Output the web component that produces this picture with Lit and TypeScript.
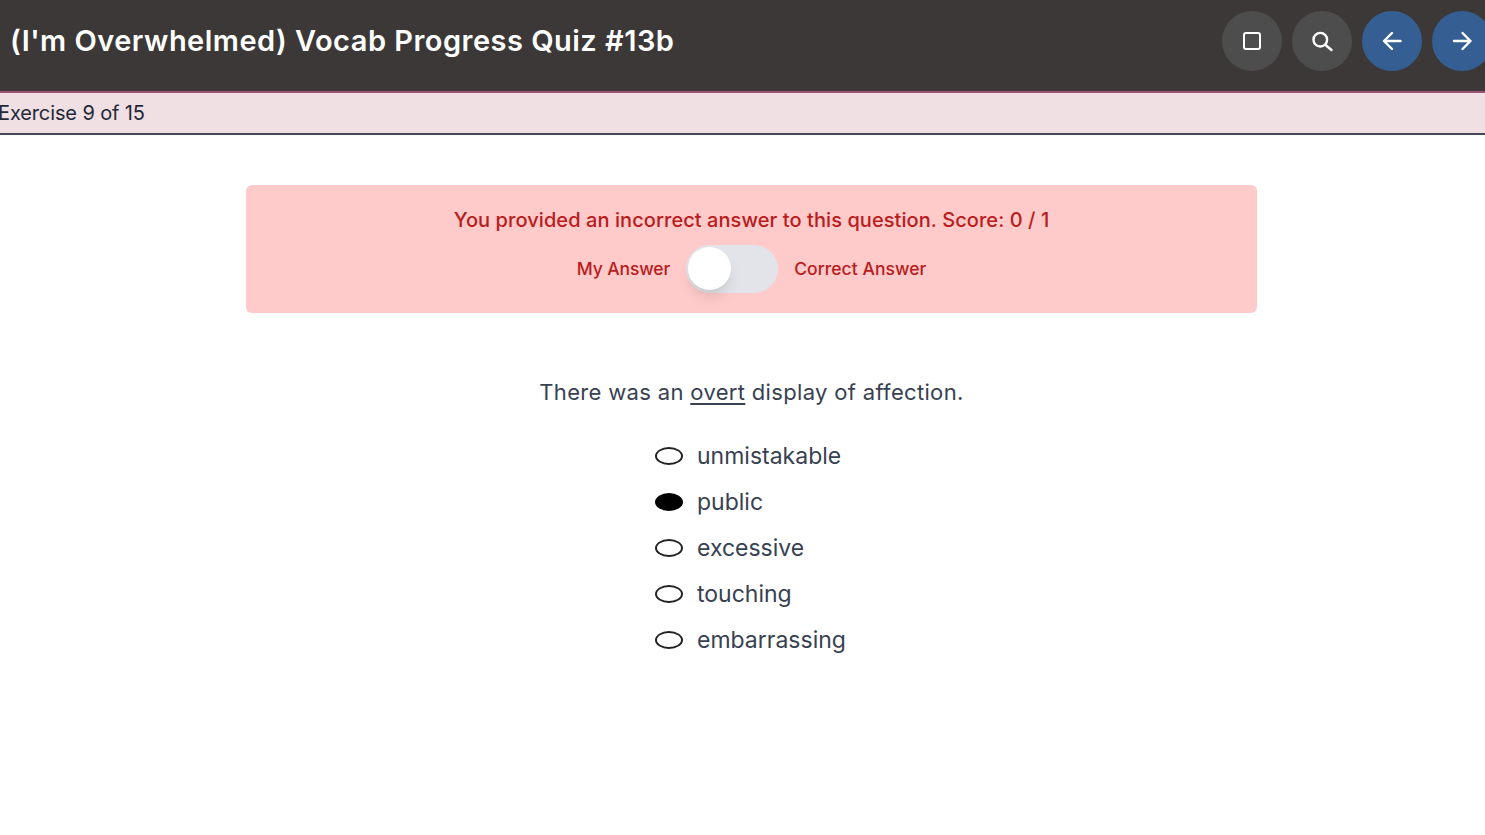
import { LitElement, html, css } from "lit";
import { customElement, state } from "lit/decorators.js";

@customElement("app-root")
export class AppRoot extends LitElement {
  static styles = css`
    :host {
      display: block;
      width: 1485px;
      height: 835px;
      overflow: hidden;
      background: #fff;
      font-family: "Inter", "Noto Sans", sans-serif;
      color: #374151;
    }

    .header {
      display: flex;
      align-items: flex-start;
      justify-content: space-between;
      width: 1492px;
      height: 91px;
      padding: 11px 0 0 10px;
      box-sizing: border-box;
      background: #3c3838;
    }

    h1 {
      margin: 0;
      font-size: 29px;
      line-height: 60px;
      font-weight: 600;
      color: #fff;
      letter-spacing: 0.48px;
    }

    .buttons {
      display: flex;
      gap: 10px;
    }

    .btn {
      width: 60px;
      height: 60px;
      border-radius: 50%;
      background: #4d4d4d;
      display: flex;
      align-items: center;
      justify-content: center;
    }

    .btn.nav {
      background: #355f92;
    }

    .btn svg {
      width: 24px;
      height: 24px;
      fill: none;
      stroke: #fff;
      stroke-width: 2.4;
      stroke-linecap: round;
      stroke-linejoin: round;
    }

    .btn .thin {
      stroke-width: 2;
    }

    .progress {
      height: 40px;
      display: flex;
      align-items: center;
      background: #f0dfe3;
      border-top: 2px solid #9b5378;
      border-bottom: 2px solid #45495a;
      font-size: 20px;
      letter-spacing: -0.12px;
      color: #1f2937;
      margin-left: -2px;
    }

    .main {
      width: 1011px;
      margin: 50px 0 0 246px;
    }

    .alert {
      height: 128px;
      box-sizing: border-box;
      padding-top: 22px;
      background: #fecaca;
      border-radius: 6px;
      color: #b91c1c;
      text-align: center;
      font-size: 20px;
      line-height: 26px;
      letter-spacing: 0.07px;
      font-weight: 500;
    }

    .switch-row {
      display: flex;
      align-items: center;
      justify-content: center;
      gap: 16px;
      margin-top: 12px;
      font-size: 17.5px;
      line-height: 24px;
      letter-spacing: 0.05px;
      font-weight: 500;
    }

    .mine {
      letter-spacing: -0.1px;
    }

    .track {
      width: 92px;
      height: 48px;
      border-radius: 24px;
      background: #e2e4e9;
      position: relative;
    }

    .knob {
      position: absolute;
      left: 2px;
      top: 2px;
      width: 43px;
      height: 43px;
      border-radius: 50%;
      background: #fff;
      box-shadow: 0 10px 15px -3px rgba(0, 0, 0, 0.1), 0 4px 6px -2px rgba(0, 0, 0, 0.05);
    }

    .question {
      margin: 66px 0 0;
      text-align: center;
      font-size: 22px;
      line-height: 26px;
      letter-spacing: 0.33px;
    }

    .question u {
      text-underline-offset: 3px;
    }

    .options {
      display: flex;
      flex-direction: column;
      gap: 14px;
      margin: 35px 0 0 409px;
      font-size: 23px;
    }

    .option {
      display: flex;
      align-items: center;
      gap: 14px;
      height: 32px;
    }

    .radio {
      width: 28px;
      height: 18px;
      box-sizing: border-box;
      border: 2px solid #222;
      border-radius: 50%;
    }

    .radio.on {
      background: #000;
      border-color: #000;
    }
  `;

  @state() options = ["unmistakable", "public", "excessive", "touching", "embarrassing"];
  @state() picked = "public";

  render() {
    return html`
      <div class="header">
        <h1>(I'm Overwhelmed) Vocab Progress Quiz #13b</h1>
        <div class="buttons">
          <div class="btn">
            <svg class="thin" viewBox="0 0 24 24"><rect x="4" y="4" width="16" height="16" rx="2" /></svg>
          </div>
          <div class="btn">
            <svg viewBox="0 0 24 24"><circle cx="10.3" cy="10.7" r="6.8" /><path d="M15.5 16 21.5 21" /></svg>
          </div>
          <div class="btn nav">
            <svg viewBox="0 0 24 24"><path d="M20.5 12H4M12 4l-8 8 8 8" /></svg>
          </div>
          <div class="btn nav">
            <svg viewBox="0 0 24 24"><path d="M4 12h16.5M12.5 4l8 8-8 8" /></svg>
          </div>
        </div>
      </div>
      <div class="progress">Exercise 9 of 15</div>
      <div class="main">
        <div class="alert">
          You provided an incorrect answer to this question. Score: 0 / 1
          <div class="switch-row">
            <span class="mine">My Answer</span>
            <div class="track"><div class="knob"></div></div>
            <span>Correct Answer</span>
          </div>
        </div>
        <p class="question">There was an <u>overt</u> display of affection.</p>
        <div class="options">
          ${this.options.map(
            (o) => html`
              <div class="option">
                <span class="radio ${o === this.picked ? "on" : ""}"></span>
                <span>${o}</span>
              </div>
            `
          )}
        </div>
      </div>
    `;
  }
}
